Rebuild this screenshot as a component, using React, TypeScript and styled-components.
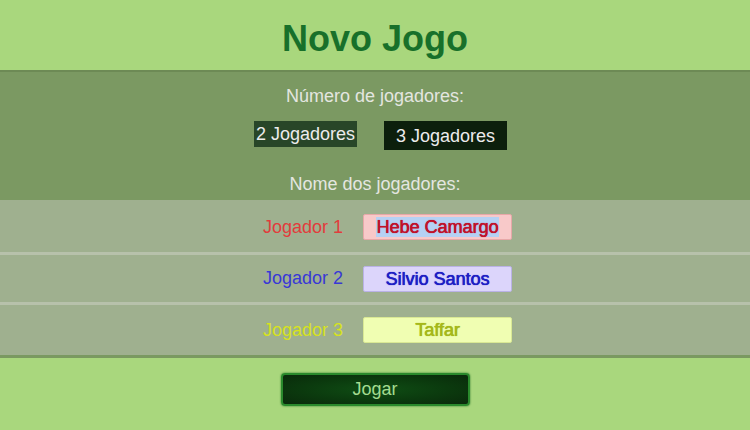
import styled, { createGlobalStyle } from 'styled-components';

const GlobalStyle = createGlobalStyle`
    html, body {
        margin: 0;
        padding: 0;
        background: #a9d77d;
        font-family: 'Liberation Sans', Arial, sans-serif;
    }
`;

interface Player {
    label: string;
    name: string;
    labelColor: string;
    textColor: string;
    fieldBg: string;
    fieldBorder: string;
    selected?: boolean;
}

const players: Player[] = [
    {
        label: 'Jogador 1',
        name: 'Hebe Camargo',
        labelColor: '#e23c3c',
        textColor: '#c0122a',
        fieldBg: '#f8c9c9',
        fieldBorder: '#e7a8a8',
        selected: true,
    },
    {
        label: 'Jogador 2',
        name: 'Silvio Santos',
        labelColor: '#3838d6',
        textColor: '#1e1ec4',
        fieldBg: '#dcd5fb',
        fieldBorder: '#bab2e6',
    },
    {
        label: 'Jogador 3',
        name: 'Taffar',
        labelColor: '#d6e21e',
        textColor: '#a6b81a',
        fieldBg: '#f0feb2',
        fieldBorder: '#d9e894',
    },
];

const StyledPage = styled.div`
    width: 750px;
    height: 430px;
    display: flex;
    flex-direction: column;
    overflow: hidden;
`;

const StyledHeader = styled.header`
    height: 70px;
    display: flex;
    align-items: center;
    justify-content: center;
    padding-top: 8px;
    box-sizing: border-box;
`;

const StyledTitle = styled.h1`
    margin: 0;
    font-size: 36px;
    font-weight: 700;
    color: #18702a;
`;

const StyledPanel = styled.section`
    background: #7b9962;
    border-top: 2px solid #6d8a55;
    padding: 13px 0 5px;
    display: flex;
    flex-direction: column;
    align-items: center;
`;

const StyledCaption = styled.p`
    margin: 0;
    font-size: 18px;
    line-height: 22px;
    color: #e4e6e0;
`;

const StyledChoices = styled.div`
    display: flex;
    align-items: flex-start;
    gap: 27px;
    margin: 14px 0 23px 11px;
`;

const StyledChoice = styled.button<{ $active?: boolean }>`
    font-family: inherit;
    font-size: 18px;
    border: none;
    color: #ececec;
    cursor: pointer;
    background: ${(p) => (p.$active ? '#0c1f0c' : '#284628')};
    height: ${(p) => (p.$active ? '29px' : '26px')};
    padding: ${(p) => (p.$active ? '0 12px' : '0 2px')};
    line-height: 1;
`;

const StyledList = styled.div`
    display: flex;
    flex-direction: column;
    border-bottom: 3px solid #7a9961;
`;

const StyledRow = styled.div`
    height: 50px;
    background: #9fb08f;
    display: grid;
    grid-template-columns: 105px 149px;
    column-gap: 20px;
    justify-content: center;
    align-items: center;
    box-sizing: border-box;

    & + & {
        border-top: 3px solid #b7c1ab;
    }

    &:first-child {
        height: 52px;
        padding-top: 2px;
    }

    &:last-child {
        height: 53px;
    }
`;

const StyledLabel = styled.span<{ $color: string }>`
    text-align: right;
    font-size: 18px;
    color: ${(p) => p.$color};
`;

const StyledField = styled.div<{ $bg: string; $border: string; $color: string }>`
    height: 26px;
    box-sizing: border-box;
    background: ${(p) => p.$bg};
    border: 1px solid ${(p) => p.$border};
    border-radius: 2px;
    color: ${(p) => p.$color};
    font-size: 18px;
    text-align: center;
    line-height: 24px;
    text-shadow: 0 0 1px ${(p) => p.$color}, 0.3px 0 0 ${(p) => p.$color};
`;

const StyledSelection = styled.span`
    background: #b5d1f4;
`;

const StyledFooter = styled.footer`
    flex: 1;
    display: flex;
    justify-content: center;
    padding-top: 15px;
`;

const StyledPlay = styled.button`
    width: 189px;
    height: 33px;
    border: 2px solid #2a8a2c;
    border-radius: 4px;
    background: radial-gradient(ellipse at center, #0f4d14 0%, #0b3a0e 55%, #0a2a0b 100%);
    box-shadow: 0 0 2px #1f6d22;
    color: #a4dc90;
    font-family: inherit;
    font-size: 18px;
    cursor: pointer;
`;

function App() {
    return (
        <>
            <GlobalStyle />
            <StyledPage>
                <StyledHeader>
                    <StyledTitle>Novo Jogo</StyledTitle>
                </StyledHeader>

                <StyledPanel>
                    <StyledCaption>Número de jogadores:</StyledCaption>
                    <StyledChoices>
                        <StyledChoice>2 Jogadores</StyledChoice>
                        <StyledChoice $active>3 Jogadores</StyledChoice>
                    </StyledChoices>
                    <StyledCaption>Nome dos jogadores:</StyledCaption>
                </StyledPanel>

                <StyledList>
                    {players.map((player) => (
                        <StyledRow key={player.label}>
                            <StyledLabel $color={player.labelColor}>{player.label}</StyledLabel>
                            <StyledField $bg={player.fieldBg} $border={player.fieldBorder} $color={player.textColor}>
                                {player.selected ? <StyledSelection>{player.name}</StyledSelection> : player.name}
                            </StyledField>
                        </StyledRow>
                    ))}
                </StyledList>

                <StyledFooter>
                    <StyledPlay>Jogar</StyledPlay>
                </StyledFooter>
            </StyledPage>
        </>
    );
}

export default App;
